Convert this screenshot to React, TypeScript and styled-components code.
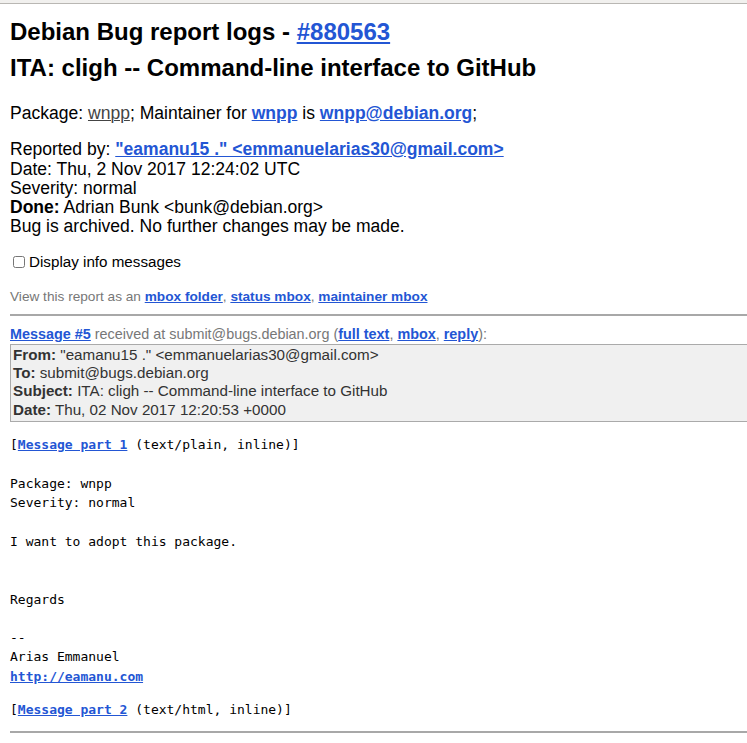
import React from "react";
import styled, { createGlobalStyle } from "styled-components";

const Global = createGlobalStyle`
  html, body { margin: 0; padding: 0; background: #fff; overflow: hidden; }
  body { font-family: "Liberation Sans", Arial, sans-serif; color: #000; }
`;

const TopStrip = styled.div`
  height: 3px;
  background: #f1f0ee;
  border-bottom: 1px solid #b9b7b3;
`;

const Page = styled.div`
  width: 760px;
  padding: 0 10px;
`;

const Link = styled.a`
  color: #2356d4;
  font-weight: bold;
  text-decoration: underline;
`;

const Title = styled.h1`
  margin: 10px 0 0;
  font-size: 24px;
  line-height: 36px;
  font-weight: bold;
`;

const Abbr = styled.span`
  color: #444;
  text-decoration: underline;
  text-decoration-thickness: 1px;
`;

const Info = styled.div<{ $top: number }>`
  margin-top: ${(p) => p.$top}px;
  font-size: 17.55px;
  line-height: 19.25px;
`;

const CheckRow = styled.label`
  display: flex;
  align-items: center;
  gap: 4px;
  margin-top: 16px;
  margin-left: 3px;
  font-size: 15.2px;
  line-height: 18px;
`;

const Box = styled.input`
  width: 12px;
  height: 12px;
  margin: 0;
`;

const Small = styled.p`
  margin: 18px 0 0;
  font-size: 13.65px;
  line-height: 16px;
  color: #777;
`;

const Rule = styled.hr<{ $top: number }>`
  margin: ${(p) => p.$top}px 0 0;
  border: 0;
  border-top: 2px solid #a8a8a8;
  width: 760px;
`;

const Received = styled.p`
  margin: 9px 0 0;
  font-size: 14.4px;
  line-height: 18px;
  color: #777;
`;

const Headers = styled.div`
  margin-top: 1px;
  background: #f0f0f0;
  border: 1px solid #aaa;
  padding: 1px 2px 2px 2px;
  font-size: 15.2px;
  line-height: 18.4px;
  color: #333;
`;

const HeaderLabel = styled.b`
  color: #333;
`;

const Pre = styled.pre<{ $top: number }>`
  margin: ${(p) => p.$top}px 0 0;
  font-family: "DejaVu Sans Mono", monospace;
  font-size: 13px;
  line-height: 19.3px;
  color: #000;
  white-space: pre;
`;

const MonoLink = styled(Link)`
  font-family: "DejaVu Sans Mono", monospace;
`;

export default function App() {
  return (
    <>
      <Global />
      <TopStrip />
      <Page>
        <Title>
          Debian Bug report logs - <Link href="#">#880563</Link>
          <br />
          ITA: cligh -- Command-line interface to GitHub
        </Title>
        <Info $top={18}>
          Package: <Abbr>wnpp</Abbr>; Maintainer for <Link href="#">wnpp</Link> is{" "}
          <Link href="#">wnpp@debian.org</Link>;
        </Info>
        <Info $top={17}>
          Reported by: <Link href="#">"eamanu15 ." &lt;emmanuelarias30@gmail.com&gt;</Link>
          <br />
          Date: Thu, 2 Nov 2017 12:24:02 UTC
          <br />
          Severity: normal
          <br />
          <b>Done:</b> Adrian Bunk &lt;bunk@debian.org&gt;
          <br />
          Bug is archived. No further changes may be made.
        </Info>
        <CheckRow>
          <Box type="checkbox" />
          Display info messages
        </CheckRow>
        <Small>
          View this report as an <Link href="#">mbox folder</Link>,{" "}
          <Link href="#">status mbox</Link>, <Link href="#">maintainer mbox</Link>
        </Small>
        <Rule $top={9} />
        <Received>
          <Link href="#">Message #5</Link> received at submit@bugs.debian.org (
          <Link href="#">full text</Link>, <Link href="#">mbox</Link>,{" "}
          <Link href="#">reply</Link>):
        </Received>
        <Headers>
          <HeaderLabel>From:</HeaderLabel> "eamanu15 ." &lt;emmanuelarias30@gmail.com&gt;
          <br />
          <HeaderLabel>To:</HeaderLabel> submit@bugs.debian.org
          <br />
          <HeaderLabel>Subject:</HeaderLabel> ITA: cligh -- Command-line interface to GitHub
          <br />
          <HeaderLabel>Date:</HeaderLabel> Thu, 02 Nov 2017 12:20:53 +0000
        </Headers>
        <Pre $top={13}>
          [<MonoLink href="#">Message part 1</MonoLink> (text/plain, inline)]
          {"\n\n"}Package: wnpp{"\n"}Severity: normal{"\n\n"}I want to adopt this package.
          {"\n\n\n"}Regards{"\n\n"}--{"\n"}Arias Emmanuel{"\n"}
          <MonoLink href="#">http://eamanu.com</MonoLink>
        </Pre>
        <Pre $top={14}>
          [<MonoLink href="#">Message part 2</MonoLink> (text/html, inline)]
        </Pre>
        <Rule $top={12} />
      </Page>
    </>
  );
}
